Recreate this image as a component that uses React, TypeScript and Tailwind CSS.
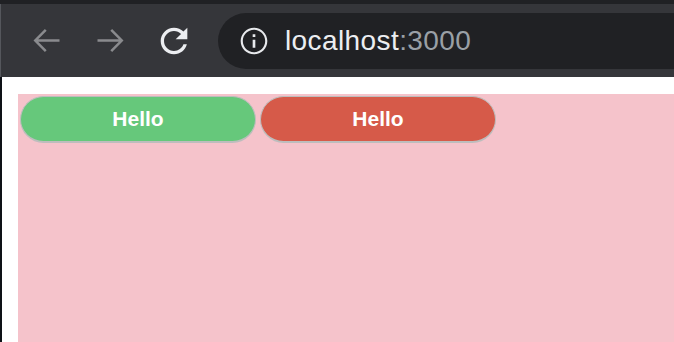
const BUTTONS = [
  { label: "Hello", color: "bg-[#66c87b]" },
  { label: "Hello", color: "bg-[#d65a49]" },
] as const;

function BackIcon() {
  return (
    <svg width="39" height="39" viewBox="0 0 24 24" fill="#8a8b8e">
      <path d="M20 11.2H6.9l5.2-5.2-1.1-1.1L4 12l7 7.1 1.1-1.1-5.2-5.2H20z" />
    </svg>
  );
}

function ForwardIcon() {
  return (
    <svg width="39" height="39" viewBox="0 0 24 24" fill="#8a8b8e">
      <path d="M4 11.2h13.1l-5.2-5.2 1.1-1.1L20 12l-7 7.1-1.1-1.1 5.2-5.2H4z" />
    </svg>
  );
}

function ReloadIcon() {
  return (
    <svg width="40" height="40" viewBox="0 0 24 24" fill="#eceef1">
      <path d="M17.65 6.35C16.2 4.9 14.21 4 12 4c-4.42 0-7.99 3.58-7.99 8s3.57 8 7.99 8c3.73 0 6.84-2.55 7.73-6h-2.08c-.82 2.33-3.04 4-5.65 4-3.31 0-6-2.69-6-6s2.69-6 6-6c1.66 0 3.14.69 4.22 1.78L13 11h7V4l-2.35 2.35z" />
    </svg>
  );
}

function InfoIcon() {
  return (
    <svg width="32" height="32" viewBox="0 0 24 24" fill="#e8eaed">
      <path d="M11 7h2v2h-2zm0 4h2v6h-2zm1-9C6.48 2 2 6.48 2 12s4.48 10 10 10 10-4.48 10-10S17.52 2 12 2zm0 18.4c-4.63 0-8.4-3.77-8.4-8.4S7.37 3.6 12 3.6s8.4 3.77 8.4 8.4-3.77 8.4-8.4 8.4z" />
    </svg>
  );
}

export default function App() {
  return (
    <div className="flex h-[342px] w-full flex-col overflow-hidden bg-white font-['Liberation_Sans',Arial,sans-serif]">
      <div className="h-[4px] shrink-0 bg-[#202124]" />
      <div className="flex h-[73px] shrink-0 items-center border-l border-[#55575c] bg-[#35363a] pl-[26px]">
        <BackIcon />
        <div className="ml-[25px]">
          <ForwardIcon />
        </div>
        <div className="ml-[24px]">
          <ReloadIcon />
        </div>
        <div className="ml-[24px] flex h-[56px] flex-1 items-center rounded-l-full bg-[#202124] pl-[20px]">
          <InfoIcon />
          <span className="ml-[15px] text-[28px] leading-none tracking-[0.4px] text-[#eceef1]">
            localhost<span className="text-[#9aa0a6]">:3000</span>
          </span>
        </div>
      </div>
      <div className="flex flex-1 border-l-2 border-[#0e1116] pl-[16px] pt-[17px]">
        <div className="flex flex-1 items-start gap-[4px] bg-[#f5c3cb] p-[2px]">
          {BUTTONS.map((b, i) => (
            <button
              key={i}
              className={`${b.color} flex h-[47px] w-[236px] items-center justify-center rounded-full border border-b-2 border-[#bdbdbd] text-[21px] font-bold text-white`}
            >
              {b.label}
            </button>
          ))}
        </div>
      </div>
    </div>
  );
}
